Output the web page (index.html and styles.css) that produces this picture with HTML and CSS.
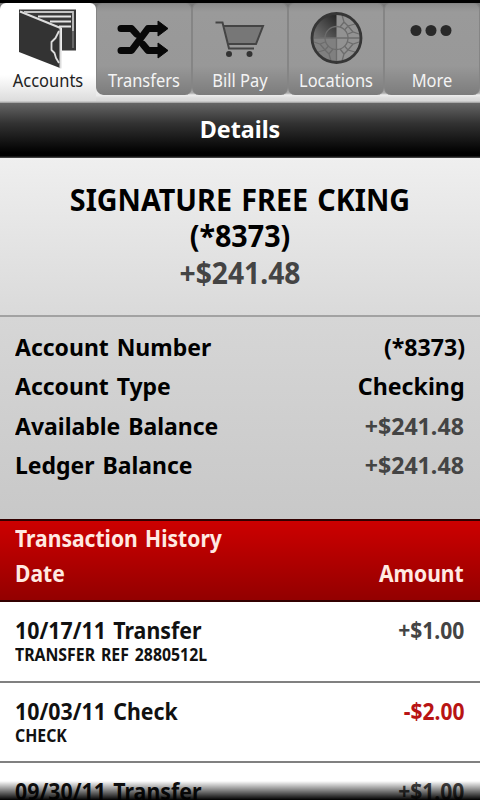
FILE: index.html
```
<!DOCTYPE html>
<html lang="en">
<head>
<meta charset="utf-8">
<title>Account Details</title>
<link rel="stylesheet" href="styles.css">
</head>
<body>
<main class="screen">
  <nav class="tabs">
    <a class="tab active">
      <svg class="icon" viewBox="0 0 96 68">
        <path d="M19 9.500H76V50.500H62V28L19 11Z" fill="#383838"/>
        <path d="M24 12H73V31" fill="none" stroke="#c4c4c4" stroke-width="1.800"/>
        <path d="M38 16.500H71M50 21.500H71M59 26.500H71" stroke="#e4e4e4" stroke-width="2"/>
        <path d="M73 31V48" stroke="#777" stroke-width="1.500"/>
        <path d="M19 10L60 27.500V68L19 52Z" fill="#333"/>
        <path d="M20 11.500L60.500 28V68.500" fill="none" stroke="#ddd" stroke-width="2"/>
        <path d="M59 31L55.500 38L51.500 42V50L54.500 53L56 58L59 63" fill="none" stroke="#ddd" stroke-width="1.800" stroke-linejoin="round"/>
      </svg>
      <span class="label">Accounts</span>
    </a>
    <a class="tab">
      <svg class="icon" viewBox="0 0 96 68">
        <path d="M25 28.500H35.500L40.500 34M47 44.500L52 50.500H63M25 50.500H35.500L52 28.500H63" fill="none" stroke="#080808" stroke-width="7" stroke-linejoin="round" stroke-linecap="round"/>
        <path d="M62 21L72 28.500L62 36ZM62 43L72 50.500L62 58Z" fill="#080808" stroke="#080808" stroke-linejoin="round"/>
      </svg>
      <span class="label">Transfers</span>
    </a>
    <a class="tab">
      <svg class="icon" viewBox="0 0 96 68">
        <path d="M32 26H71L64 44H36Z" fill="#777"/>
        <path d="M23.500 22.500H30.500L37 48.500H62M31 26H71L64 44H36" fill="none" stroke="#444" stroke-width="2"/>
        <circle cx="37" cy="54" r="3" fill="#333"/><circle cx="57.500" cy="54" r="3" fill="#333"/>
      </svg>
      <span class="label">Bill Pay</span>
    </a>
    <a class="tab">
      <svg class="icon" viewBox="0 0 96 68">
        <defs><linearGradient id="sweep" x1="0" x2="1" y1="1" y2="0"><stop offset="0" stop-color="#777"/><stop offset="1" stop-color="#222"/></linearGradient></defs>
        <circle cx="48.500" cy="38" r="24.500" fill="#929292"/>
        <path d="M48.500 38V62.500A24.500 24.500 0 0 1 24 38Z" fill="#808080"/>
        <path d="M48.500 38H24A24.500 24.500 0 0 1 48.500 13.500Z" fill="url(#sweep)"/>
        <g fill="none" stroke="#6c6c6c" stroke-width="1.300">
          <path d="M24 38H73M48.500 38V62"/>
          <circle cx="48.500" cy="38" r="11.500"/>
          <path d="M52 27L56 22L54 15M56.500 30L60 26L67 24M56 22L60 26M60 34L65 32L71 34M65 32L60 26M60 42L65 44L71 42M56.500 46L60 50L67 52M65 44L60 50M52 49L56 54L54 61M56 54L60 50M45 49L41 54L43 61M40.500 46L37 50L30 52M37 50L41 54M37 42L32 44L26 42M32 44L37 50"/>
        </g>
        <circle cx="48.500" cy="38" r="24.500" fill="none" stroke="#363636" stroke-width="2.800"/>
      </svg>
      <span class="label">Locations</span>
    </a>
    <a class="tab">
      <svg class="icon" viewBox="0 0 96 68">
        <g fill="#292929"><circle cx="32" cy="30.500" r="5.500"/><circle cx="47" cy="30.500" r="5.500"/><circle cx="62" cy="30.500" r="5.500"/></g>
      </svg>
      <span class="label">More</span>
    </a>
  </nav>
  <header class="bar"><h1>Details</h1></header>
  <section class="summary">
    <h2>SIGNATURE FREE CKING<br>(*8373)</h2>
    <p>+$241.48</p>
  </section>
  <dl class="info">
    <div><dt>Account Number</dt><dd>(*8373)</dd></div>
    <div><dt>Account Type</dt><dd>Checking</dd></div>
    <div><dt>Available Balance</dt><dd class="money">+$241.48</dd></div>
    <div><dt>Ledger Balance</dt><dd class="money">+$241.48</dd></div>
  </dl>
  <section class="history">
    <header class="history-head">
      <h3>Transaction History</h3>
      <div class="columns"><span>Date</span><span>Amount</span></div>
    </header>
    <article class="entry">
      <div class="line"><span>10/17/11 Transfer</span><span class="money">+$1.00</span></div>
      <p class="memo">TRANSFER REF 2880512L</p>
    </article>
    <article class="entry">
      <div class="line"><span>10/03/11 Check</span><span class="money debit">-$2.00</span></div>
      <p class="memo">CHECK</p>
    </article>
    <article class="entry">
      <div class="line"><span>09/30/11 Transfer</span><span class="money">+$1.00</span></div>
    </article>
  </section>
  <div class="fade"></div>
</main>
</body>
</html>
```
FILE: styles.css
```
* { box-sizing: border-box; margin: 0; padding: 0; }
body { background: #000; font-family: "Noto Sans", "Open Sans", sans-serif; }
.screen { position: relative; width: 480px; height: 800px; overflow: hidden; background: #fff; }
.tabs { display: flex; height: 103px; padding-top: 3px; background: linear-gradient(#000 0 3px, #777 3px, #8b8b8b 60px, #aaa 93px, #eee 95px, #ddd 98px, #d8d8d8 101px, #999 103px); }
.tab { flex: 0 0 96px; width: 96px; min-width: 0; height: 92px; display: flex; flex-direction: column; border: solid #858585; border-width: 1px 1px 0; border-radius: 6px 6px 7px 7px; background: linear-gradient(#8b8b8b, #9a9a9a 8px, #989898 62px, #7c7c7c); color: #f4f4f4; }
.tab.active { position: relative; height: 98px; border-color: transparent; background: linear-gradient(#fff 72px, #dcdcdc) border-box; color: #222; border-radius: 6px 6px 0 0; }
.tab.active::after { content: ""; position: absolute; left: 95px; top: 83px; width: 8px; height: 9px; background: radial-gradient(circle at 8px 0, transparent 7.500px, #ececec 8.500px); }
.icon { display: block; width: 96px; height: 68px; margin: -4px 0 0 -1px; overflow: visible; flex: none; }
.label { height: 26px; font-size: 18.500px; line-height: 23px; text-align: center; white-space: nowrap; transform: scaleX(.89); }
.bar { height: 55px; padding-top: 9px; text-align: center; color: #fff; background: linear-gradient(#666, #333 20px, #000 50px, #000 53px, #555); }
.bar h1 { font-size: 24px; line-height: 33px; transform: scaleX(.97); }
.summary { height: 159px; padding-top: 23px; text-align: center; border-bottom: 2px solid #a2a2a2; background: linear-gradient(#efefef, #dadada); }
.summary h2, .summary p { font-size: 31px; line-height: 36.300px; font-weight: 700; }
.summary h2 { word-spacing: 2px; transform: scaleX(.926); }
.summary p { color: #444; transform: scaleX(.91); }
.info { height: 202px; padding: 10px 15px 0; background: linear-gradient(#d6d6d6, #c8c8c8); }
.info div { display: flex; justify-content: space-between; height: 39.400px; font-size: 24px; line-height: 39px; font-weight: 700; }
.info dt { word-spacing: 2px; transform: scaleX(.957); transform-origin: left; }
.info dd { transform: scaleX(.965); transform-origin: right; }
.money { color: #444; }
.info .money { padding-right: 1px; }
.history-head { height: 83px; padding: 0 15px; border: solid #300; border-width: 2px 0; color: #ffe9e2; background: linear-gradient(#cd0000, #930000); }
.history-head h3, .columns { font-size: 23px; line-height: 34.500px; font-weight: 700; }
.history-head h3 { word-spacing: 2px; transform: scaleX(.916); transform-origin: left; }
.columns, .line { display: flex; justify-content: space-between; }
.columns span, .line span { transform: scaleX(.915); transform-origin: right; }
.columns span:first-child, .line span:first-child { word-spacing: 2px; transform-origin: left; }
.line span:first-child { transform: scaleX(.927); }
.columns span:last-child, .line .money { padding-right: 1px; }
.entry { height: 80.500px; padding: 13px 15px 0; border-bottom: 2px solid #808080; color: #111; }
.line { font-size: 23px; line-height: 31px; font-weight: 700; }
.memo { margin-top: -1px; font-size: 18px; line-height: 18px; font-weight: 700; word-spacing: 2px; transform: scaleX(.88); transform-origin: left; }
.money.debit { color: #b81414; }
.fade { position: absolute; left: 0; right: 0; bottom: 0; height: 19px; background: linear-gradient(transparent, #000); }
```
